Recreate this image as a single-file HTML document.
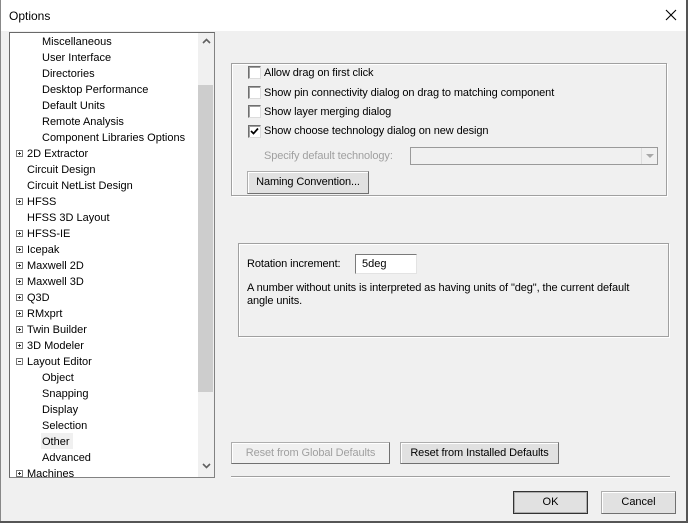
<!DOCTYPE html>
<html><head><style>
*{box-sizing:border-box;margin:0;padding:0}
body{width:688px;height:523px;background:#f0f0f0;font-family:"Liberation Sans",Tahoma,sans-serif;font-size:11px;color:#000;position:relative;overflow:hidden}
.a{position:absolute;white-space:nowrap}
.title{left:0;top:0;width:688px;height:31px;background:#fff}
.tree{left:9px;top:32px;width:206px;height:446px;background:#fff;border:1px solid #828282;border-top-color:#696969;border-left-color:#696969;overflow:hidden}
.row{position:absolute;height:16px;line-height:18px}
.pm{position:absolute;width:7px;height:7px;border:1px solid #777;top:5px}
.pm:before{content:"";position:absolute;left:1px;top:2px;width:3px;height:1px;background:#333}
.pm.p:after{content:"";position:absolute;left:2px;top:1px;width:1px;height:3px;background:#333}
.grp{border:1px solid #a0a0a0;box-shadow:inset 1px 1px 0 #fff,1px 1px 0 #fff}
.cb{position:absolute;width:13px;height:13px;background:#fff;border:1px solid #6f6f6f;border-right-color:#dcdcdc;border-bottom-color:#dcdcdc;box-shadow:inset 1px 1px 0 #a0a0a0}
.btn{position:absolute;background:#e1e1e1;border:1px solid #adadad;border-right-color:#707070;border-bottom-color:#707070;text-align:center;box-shadow:inset 1px 1px 0 #fff}
.t{letter-spacing:-0.1px}
</style></head><body>
<div class="a title"></div>
<div class="a" style="left:9px;top:9px;font-size:12px">Options</div>
<svg class="a" style="left:665px;top:9px" width="12" height="12"><path d="M1 1L11 11M11 1L1 11" stroke="#000" stroke-width="1.1"/></svg>
<div class="a" style="left:686px;top:0;width:2px;height:523px;background:#555"></div>
<div class="a" style="left:0;top:0;width:1px;height:523px;background:#888"></div>
<div class="a" style="left:0;top:521px;width:688px;height:2px;background:#555"></div>

<div class="a tree">
 <div class="row" style="left:32px;top:0">Miscellaneous</div>
 <div class="row" style="left:32px;top:16px">User Interface</div>
 <div class="row" style="left:32px;top:32px">Directories</div>
 <div class="row" style="left:32px;top:48px">Desktop Performance</div>
 <div class="row" style="left:32px;top:64px">Default Units</div>
 <div class="row" style="left:32px;top:80px">Remote Analysis</div>
 <div class="row" style="left:32px;top:96px">Component Libraries Options</div>
 <div class="row" style="left:6px;top:112px;width:150px"><span class="pm p" style="left:0"></span><span style="margin-left:11px">2D Extractor</span></div>
 <div class="row" style="left:17px;top:128px">Circuit Design</div>
 <div class="row" style="left:17px;top:144px">Circuit NetList Design</div>
 <div class="row" style="left:6px;top:160px;width:150px"><span class="pm p" style="left:0"></span><span style="margin-left:11px">HFSS</span></div>
 <div class="row" style="left:17px;top:176px">HFSS 3D Layout</div>
 <div class="row" style="left:6px;top:192px;width:150px"><span class="pm p" style="left:0"></span><span style="margin-left:11px">HFSS-IE</span></div>
 <div class="row" style="left:6px;top:208px;width:150px"><span class="pm p" style="left:0"></span><span style="margin-left:11px">Icepak</span></div>
 <div class="row" style="left:6px;top:224px;width:150px"><span class="pm p" style="left:0"></span><span style="margin-left:11px">Maxwell 2D</span></div>
 <div class="row" style="left:6px;top:240px;width:150px"><span class="pm p" style="left:0"></span><span style="margin-left:11px">Maxwell 3D</span></div>
 <div class="row" style="left:6px;top:256px;width:150px"><span class="pm p" style="left:0"></span><span style="margin-left:11px">Q3D</span></div>
 <div class="row" style="left:6px;top:272px;width:150px"><span class="pm p" style="left:0"></span><span style="margin-left:11px">RMxprt</span></div>
 <div class="row" style="left:6px;top:288px;width:150px"><span class="pm p" style="left:0"></span><span style="margin-left:11px">Twin Builder</span></div>
 <div class="row" style="left:6px;top:304px;width:150px"><span class="pm p" style="left:0"></span><span style="margin-left:11px">3D Modeler</span></div>
 <div class="row" style="left:6px;top:320px;width:150px"><span class="pm" style="left:0"></span><span style="margin-left:11px">Layout Editor</span></div>
 <div class="row" style="left:32px;top:336px">Object</div>
 <div class="row" style="left:32px;top:352px">Snapping</div>
 <div class="row" style="left:32px;top:368px">Display</div>
 <div class="row" style="left:32px;top:384px">Selection</div>
 <div class="row" style="left:31px;top:400px;background:#f0f0f0;padding:0 1px;width:32px">Other</div>
 <div class="row" style="left:32px;top:416px">Advanced</div>
 <div class="row" style="left:6px;top:432px;width:150px"><span class="pm p" style="left:0"></span><span style="margin-left:11px">Machines</span></div>
 <div style="position:absolute;left:188px;top:0;width:17px;height:446px;background:#f0f0f0"></div>
 <div style="position:absolute;left:188px;top:52px;width:15px;height:307px;background:#cdcdcd"></div>
 <svg style="position:absolute;left:192px;top:5px" width="9" height="6"><path d="M1 5L4.5 1.5L8 5" stroke="#606060" stroke-width="1.6" fill="none"/></svg>
 <svg style="position:absolute;left:192px;top:430px" width="9" height="6"><path d="M1 1L4.5 4.5L8 1" stroke="#606060" stroke-width="1.6" fill="none"/></svg>
</div>

<div class="a grp" style="left:231px;top:63px;width:436px;height:133px"></div>
<div class="cb" style="left:248px;top:66px"></div><div class="a t" style="left:264px;top:67px">Allow drag on first click</div>
<div class="cb" style="left:248px;top:86px"></div><div class="a t" style="left:264px;top:87px">Show pin connectivity dialog on drag to matching component</div>
<div class="cb" style="left:248px;top:105px"></div><div class="a t" style="left:264px;top:106px">Show layer merging dialog</div>
<div class="cb" style="left:248px;top:125px"><svg style="position:absolute;left:1px;top:1px" width="9" height="9"><path d="M1 4L3.5 6.5L8 1.5" stroke="#000" stroke-width="1.7" fill="none"/></svg></div><div class="a t" style="left:264px;top:125px">Show choose technology dialog on new design</div>
<div class="a t" style="left:264px;top:150px;color:#a0a0a0">Specify default technology:</div>
<div class="a" style="left:410px;top:147px;width:248px;height:18px;border:1px solid #9a9a9a;background:#f0f0f0"><svg style="position:absolute;right:3px;top:6px" width="8" height="5"><path d="M0 0H8L4 4Z" fill="#a8a8a8"/></svg><div style="position:absolute;right:0;top:0;width:16px;height:16px;border-left:1px solid #ddd"></div></div>
<div class="btn t" style="left:247px;top:171px;width:122px;height:23px;line-height:21px">Naming Convention...</div>

<div class="a grp" style="left:238px;top:243px;width:431px;height:94px"></div>
<div class="a t" style="left:247px;top:258px">Rotation increment:</div>
<div class="a" style="left:355px;top:254px;width:62px;height:20px;background:#fff;border:1px solid #7a7a7a;border-right-color:#e3e3e3;border-bottom-color:#e3e3e3;padding:3px 0 0 6px">5deg</div>
<div class="a t" style="left:247px;top:282px;line-height:13px">A number without units is interpreted as having units of "deg", the current default<br>angle units.</div>

<div class="btn t" style="left:231px;top:442px;width:159px;height:22px;line-height:20px;color:#a0a0a0;background:#f0f0f0">Reset from Global Defaults</div>
<div class="btn t" style="left:400px;top:442px;width:159px;height:22px;line-height:20px">Reset from Installed Defaults</div>
<div class="a" style="left:231px;top:476px;width:439px;height:2px;border-top:1px solid #a0a0a0;border-bottom:1px solid #fff"></div>
<div class="btn" style="left:513px;top:491px;width:75px;height:23px;line-height:21px;border:1px solid #333;box-shadow:inset 0 0 0 1px #adadad">OK</div>
<div class="btn" style="left:601px;top:491px;width:75px;height:23px;line-height:21px">Cancel</div>
</body></html>
